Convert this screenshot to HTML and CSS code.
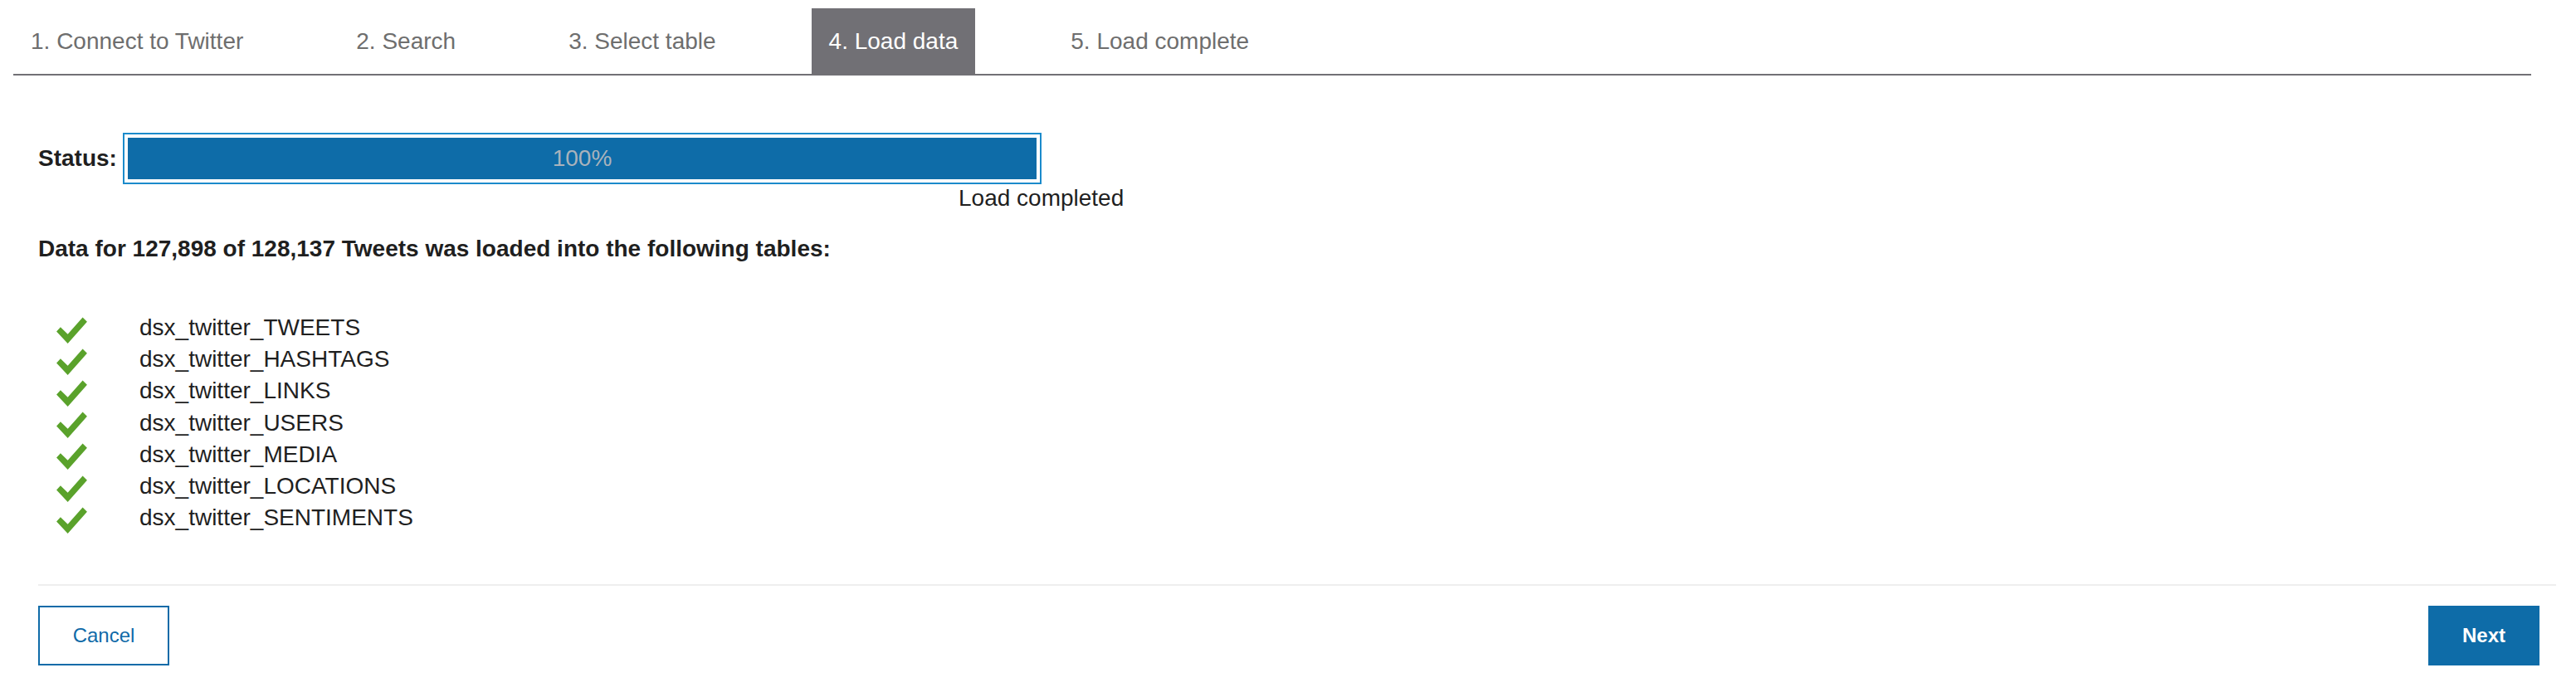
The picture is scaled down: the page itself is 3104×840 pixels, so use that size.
FILE: index.html
```html
<!DOCTYPE html>
<html lang="en">
<head>
<meta charset="utf-8">
<title>Load data</title>
<link rel="stylesheet" href="styles.css">
</head>
<body>
<nav class="steps">
  <div class="step">1. Connect to Twitter</div>
  <div class="step">2. Search</div>
  <div class="step">3. Select table</div>
  <div class="step step-active">4. Load data</div>
  <div class="step">5. Load complete</div>
</nav>

<main class="content">
  <div class="status-row">
    <div class="status-label">Status:</div>
    <div class="progress">
      <div class="progress-fill" style="width:100%">100%</div>
    </div>
  </div>
  <div class="status-msg">Load completed</div>

  <h2 class="summary">Data for 127,898 of 128,137 Tweets was loaded into the following tables:</h2>

  <ul class="tables">
    <li class="table-row"><svg class="check" viewBox="0 0 38 34"><polygon points="0,18 5,12.5 14,21.5 32.5,0.5 38,6 14,33"/></svg><span>dsx_twitter_TWEETS</span></li>
    <li class="table-row"><svg class="check" viewBox="0 0 38 34"><polygon points="0,18 5,12.5 14,21.5 32.5,0.5 38,6 14,33"/></svg><span>dsx_twitter_HASHTAGS</span></li>
    <li class="table-row"><svg class="check" viewBox="0 0 38 34"><polygon points="0,18 5,12.5 14,21.5 32.5,0.5 38,6 14,33"/></svg><span>dsx_twitter_LINKS</span></li>
    <li class="table-row"><svg class="check" viewBox="0 0 38 34"><polygon points="0,18 5,12.5 14,21.5 32.5,0.5 38,6 14,33"/></svg><span>dsx_twitter_USERS</span></li>
    <li class="table-row"><svg class="check" viewBox="0 0 38 34"><polygon points="0,18 5,12.5 14,21.5 32.5,0.5 38,6 14,33"/></svg><span>dsx_twitter_MEDIA</span></li>
    <li class="table-row"><svg class="check" viewBox="0 0 38 34"><polygon points="0,18 5,12.5 14,21.5 32.5,0.5 38,6 14,33"/></svg><span>dsx_twitter_LOCATIONS</span></li>
    <li class="table-row"><svg class="check" viewBox="0 0 38 34"><polygon points="0,18 5,12.5 14,21.5 32.5,0.5 38,6 14,33"/></svg><span>dsx_twitter_SENTIMENTS</span></li>
  </ul>
</main>

<footer class="actions">
  <button class="btn btn-secondary">Cancel</button>
  <button class="btn btn-primary">Next</button>
</footer>
</body>
</html>
```

FILE: styles.css
```css
* {
  box-sizing: border-box;
}

html, body {
  margin: 0;
  padding: 0;
  background: #ffffff;
}

body {
  font-family: "Liberation Sans", Arial, Helvetica, sans-serif;
  color: #1f1f1f;
  font-size: 28px;
  line-height: 32px;
}

/* ---------- Steps / tabs ---------- */
.steps {
  display: flex;
  gap: 94px;
  margin: 0 54px 0 16px;
  padding-top: 10px;
  border-bottom: 2px solid #717075;
}

.step {
  padding: 24px 21px 23px;
  color: #6e6e6e;
  white-space: nowrap;
}

.step-active {
  background: #717075;
  color: #ffffff;
}

/* ---------- Content ---------- */
.content {
  padding-left: 46px;
}

.status-row {
  display: flex;
  align-items: center;
  margin-top: 69px;
}

.status-label {
  flex: none;
  width: 102px;
  font-weight: bold;
  color: #1f1f1f;
}

.progress {
  width: 1107px;
  height: 62px;
  border: 2px solid #1b8bcb;
  padding: 4px;
}

.progress-fill {
  height: 50px;
  background: #0e6ca8;
  color: #a9b3bc;
  text-align: center;
  line-height: 50px;
}

.status-msg {
  margin-top: 1px;
  padding-left: 1109px;
  white-space: nowrap;
}

.summary {
  margin: 29px 0 0;
  font-size: 28px;
  line-height: 32px;
  font-weight: bold;
}

.tables {
  list-style: none;
  margin: 60px 0 0;
  padding: 0 0 0 22px;
}

.table-row {
  display: flex;
  align-items: center;
  height: 38.2px;
  line-height: 38px;
}

.check {
  flex: none;
  width: 37px;
  height: 33px;
  margin-top: 6px;
  margin-right: 63px;
  fill: #5aa22b;
}

/* ---------- Footer ---------- */
.actions {
  display: flex;
  justify-content: space-between;
  align-items: flex-start;
  margin: 61px 24px 0 46px;
  padding: 24px 20px 0 0;
  border-top: 2px solid #eeeeee;
}

.btn {
  height: 72px;
  font-family: "Liberation Sans", Arial, Helvetica, sans-serif;
  font-size: 24px;
  cursor: pointer;
}

.btn-secondary {
  width: 158px;
  background: #ffffff;
  border: 2px solid #0f6ba8;
  color: #0f6aa8;
}

.btn-primary {
  width: 134px;
  background: #0e6ca8;
  border: none;
  color: #ffffff;
  font-weight: bold;
}
```
